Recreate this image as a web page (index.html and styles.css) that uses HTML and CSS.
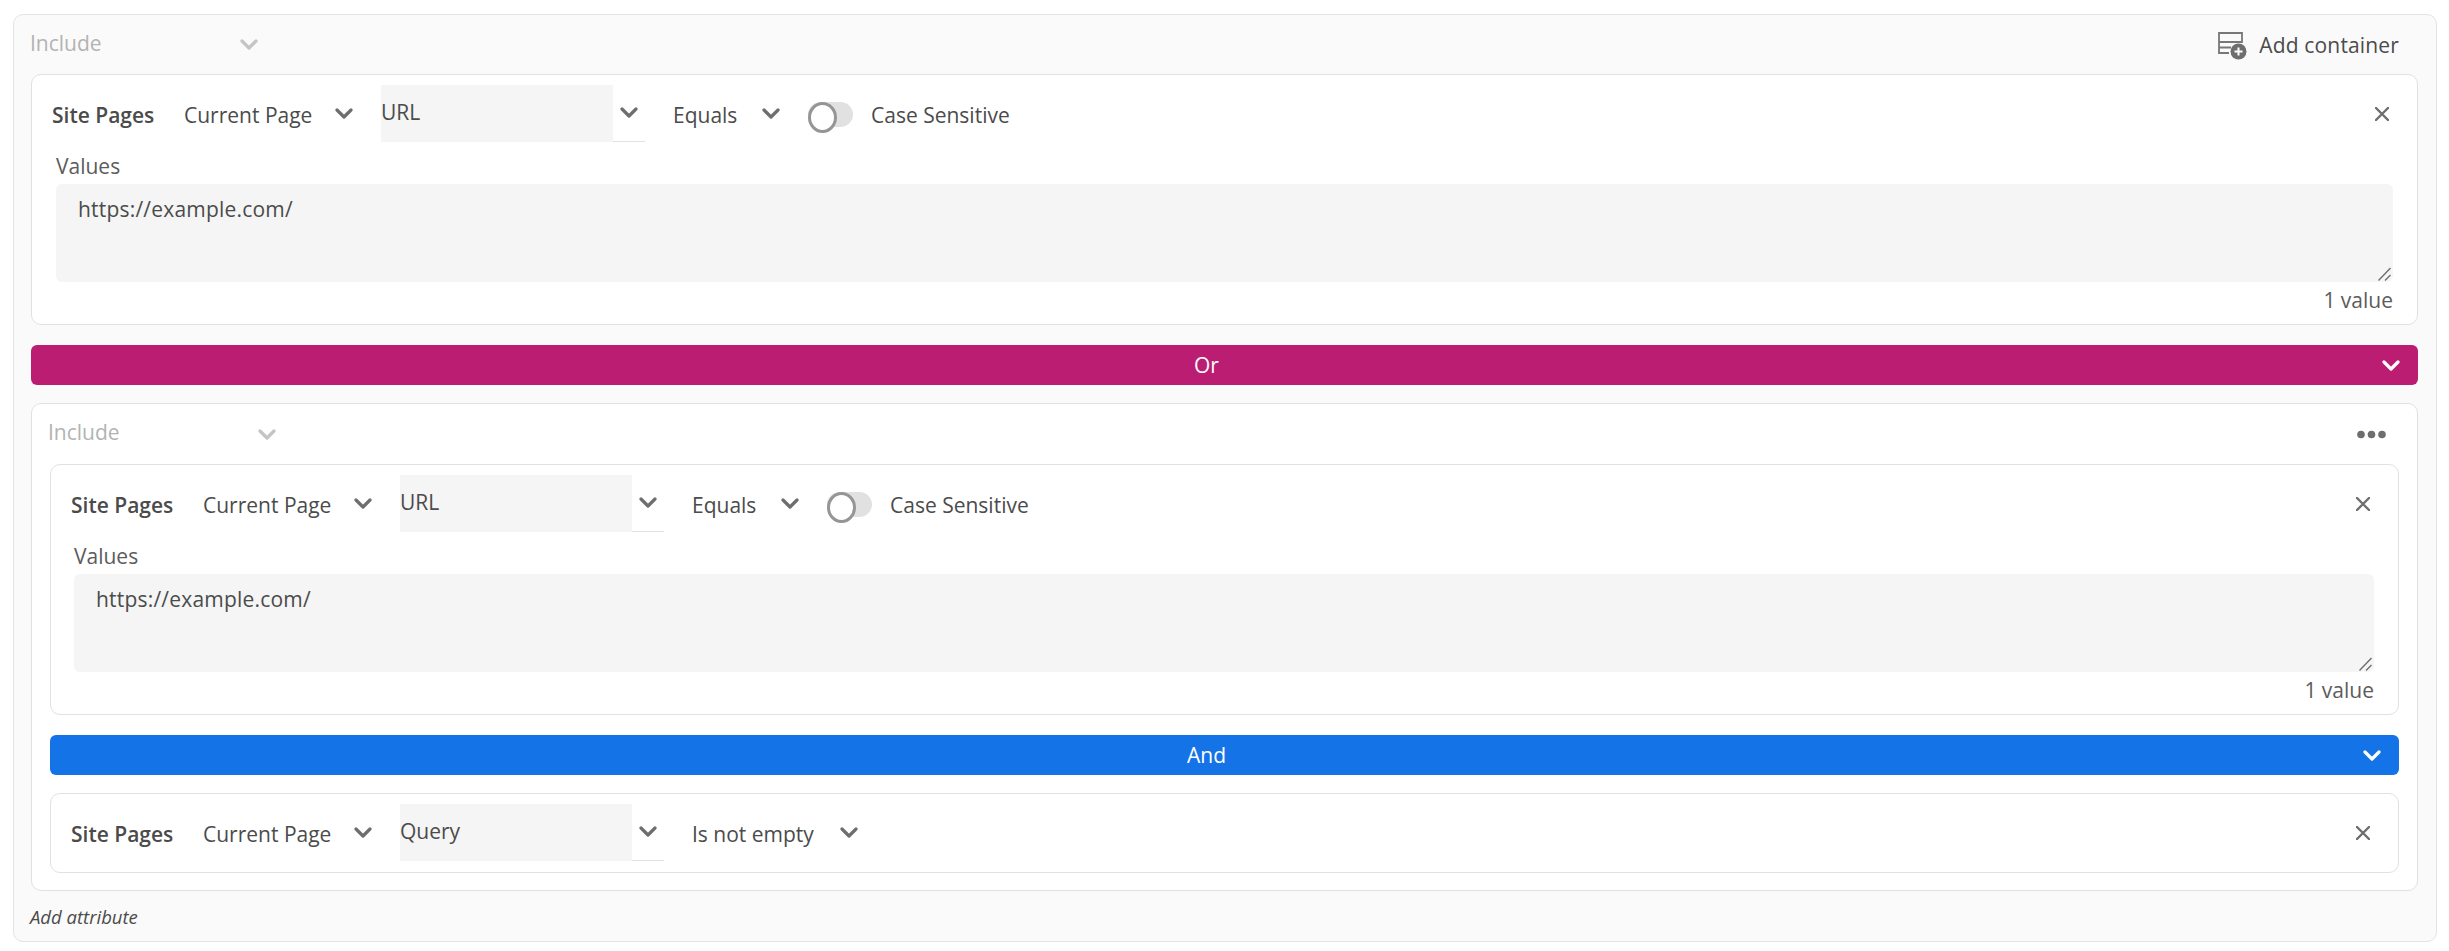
FILE: index.html
```html
<html>
    <head>
        <link rel="stylesheet" href="styles.css">
    </head>
    <body>
        <svg class="defs">
            <symbol id="chevron" viewBox="0 0 18 11">
                <path d="M2 2 L9 9 L16 2" fill="none" stroke="currentColor" stroke-width="3.2" stroke-linecap="round" stroke-linejoin="round"/>
            </symbol>
            <symbol id="close" viewBox="0 0 14 14">
                <path d="M1 1 L13 13 M13 1 L1 13" fill="none" stroke="currentColor" stroke-width="2.4" stroke-linecap="round"/>
            </symbol>
        </svg>

        <div class="builder">
            <div class="head">
                <div class="scope"><span>Include</span><svg class="chev"><use href="#chevron"/></svg></div>
                <div class="add">
                    <svg class="add-icon" viewBox="0 0 29 28">
                        <path d="M1 1 H24 V10 H1 Z M1 10 V21 H11 M1 15.5 H13" fill="none" stroke="#777" stroke-width="1.8"/>
                        <circle cx="20.5" cy="19.5" r="8" fill="#6e6e6e"/>
                        <path d="M20.5 15.5 V23.5 M16.5 19.5 H24.5" stroke="#fff" stroke-width="2"/>
                    </svg>
                    <span>Add container</span>
                </div>
            </div>

            <div class="card">
                <div class="row">
                    <span class="name">Site Pages</span>
                    <div class="pick page"><span>Current Page</span><svg class="chev"><use href="#chevron"/></svg></div>
                    <div class="combo"><div class="combo-text">URL</div><div class="combo-btn"><svg class="chev"><use href="#chevron"/></svg></div></div>
                    <div class="pick equals"><span>Equals</span><svg class="chev"><use href="#chevron"/></svg></div>
                    <div class="switch"></div>
                    <span class="switch-label">Case Sensitive</span>
                    <svg class="close"><use href="#close"/></svg>
                </div>
                <div class="values">
                    <label>Values</label>
                    <textarea readonly>https://example.com/</textarea>
                    <div class="count">1 value</div>
                </div>
            </div>

            <div class="bar or"><span>Or</span><svg class="chev"><use href="#chevron"/></svg></div>

            <div class="group">
                <div class="head">
                    <div class="scope"><span>Include</span><svg class="chev"><use href="#chevron"/></svg></div>
                    <svg class="dots" viewBox="0 0 29 9">
                        <circle cx="4" cy="4.5" r="3.8"/>
                        <circle cx="14.5" cy="4.5" r="3.8"/>
                        <circle cx="25" cy="4.5" r="3.8"/>
                    </svg>
                </div>

                <div class="card">
                    <div class="row">
                        <span class="name">Site Pages</span>
                        <div class="pick page"><span>Current Page</span><svg class="chev"><use href="#chevron"/></svg></div>
                        <div class="combo"><div class="combo-text">URL</div><div class="combo-btn"><svg class="chev"><use href="#chevron"/></svg></div></div>
                        <div class="pick equals"><span>Equals</span><svg class="chev"><use href="#chevron"/></svg></div>
                        <div class="switch"></div>
                        <span class="switch-label">Case Sensitive</span>
                        <svg class="close"><use href="#close"/></svg>
                    </div>
                    <div class="values">
                        <label>Values</label>
                        <textarea readonly>https://example.com/</textarea>
                        <div class="count">1 value</div>
                    </div>
                </div>

                <div class="bar and"><span>And</span><svg class="chev"><use href="#chevron"/></svg></div>

                <div class="card short">
                    <div class="row">
                        <span class="name">Site Pages</span>
                        <div class="pick page"><span>Current Page</span><svg class="chev"><use href="#chevron"/></svg></div>
                        <div class="combo"><div class="combo-text">Query</div><div class="combo-btn"><svg class="chev"><use href="#chevron"/></svg></div></div>
                        <div class="pick empty"><span>Is not empty</span><svg class="chev"><use href="#chevron"/></svg></div>
                        <svg class="close"><use href="#close"/></svg>
                    </div>
                </div>
            </div>

            <div class="foot">Add attribute</div>
        </div>
    </body>
</html>
```

FILE: styles.css
```css
* {
    box-sizing: border-box;
}

body {
    margin: 0;
    padding: 14px 12px 0 13px;
    background: white;
    font-family: "Open Sans", sans-serif;
    font-size: 21px;
    color: #4b4b4b;
}

.defs {
    display: none;
}

.builder {
    background: #fafafa;
    border: 1px solid #e3e3e3;
    border-radius: 10px;
    padding: 0 18px 0 17px;
    height: 928px;
}

.head {
    display: flex;
    align-items: center;
    justify-content: space-between;
    height: 59px;
}

.group > .head {
    height: 60px;
}

.scope {
    display: flex;
    align-items: center;
    justify-content: space-between;
    width: 228px;
    margin-left: -1px;
    color: #b3b3b3;
}

.group .scope {
    margin-left: -2px;
}

.scope span {
    margin-bottom: 4px;
}

.chev {
    width: 18px;
    height: 11px;
    color: #6e6e6e;
    flex: none;
}

.scope .chev {
    color: #c4c4c4;
}

.add {
    display: flex;
    align-items: center;
    gap: 12px;
    padding-right: 19px;
}

.add span {
    letter-spacing: 0.15px;
}

.add-icon {
    width: 29px;
    height: 28px;
    margin-top: 2px;
}

.dots {
    width: 29px;
    height: 9px;
    fill: #6e6e6e;
    margin-right: 13px;
}

.card {
    background: white;
    border: 1px solid #e1e1e1;
    border-radius: 10px;
    padding: 10px 0 8px 0;
    height: 251px;
}

.card.short {
    height: 80px;
}

.row {
    display: flex;
    align-items: center;
    height: 57px;
    padding: 0 28px 0 20px;
}

.name {
    width: 132px;
    font-weight: 600;
    padding-top: 3px;
}

.pick {
    display: flex;
    align-items: center;
    justify-content: space-between;
    margin-right: 28px;
}

.pick span,
.switch-label {
    padding-top: 3px;
}

.pick.page {
    width: 169px;
}

.pick.equals {
    width: 107px;
}

.pick.empty {
    width: 166px;
}

.combo {
    display: flex;
    height: 57px;
    margin-right: 28px;
}

.combo-text {
    width: 232px;
    background: #f5f5f5;
    padding-top: 13px;
    line-height: 28px;
}

.combo-btn {
    width: 32px;
    padding-bottom: 2px;
    border-bottom: 1px solid #e1e1e1;
    display: flex;
    align-items: center;
    justify-content: center;
}

.switch {
    width: 45px;
    height: 25px;
    margin-top: 2px;
    background: #e1e1e1;
    border-radius: 13px;
    margin-right: 18px;
}

.switch::before {
    content: "";
    display: block;
    width: 23px;
    height: 25px;
    background: white;
    border: 3px solid #959595;
    border-radius: 50%;
}

.close {
    width: 14px;
    height: 14px;
    color: #6e6e6e;
    margin-left: auto;
}

.values {
    padding: 0 24px;
}

.group .values {
    padding-left: 23px;
}

.values label {
    display: block;
    height: 42px;
    padding-top: 10px;
    line-height: 28px;
    color: #5c5c5c;
}

textarea {
    display: block;
    width: 100%;
    height: 98px;
    border: 0;
    border-radius: 6px;
    background: #f5f5f5;
    padding: 11px 22px;
    font-family: "Open Sans", sans-serif;
    font-size: 21px;
    letter-spacing: 0.2px;
    line-height: 28px;
    color: #4b4b4b;
    outline: 0;
    resize: vertical;
}

textarea::-webkit-resizer {
    background: url("data:image/svg+xml,%3Csvg xmlns='http://www.w3.org/2000/svg' width='15' height='15'%3E%3Cpath d='M0.5 13.5 L12.5 1 M7 13.5 L12.5 8' stroke='%236e6e6e' stroke-width='1.4' fill='none'/%3E%3C/svg%3E") no-repeat;
}

.count {
    margin-top: 4px;
    line-height: 28px;
    text-align: right;
    color: #5c5c5c;
}

.bar {
    display: flex;
    align-items: center;
    height: 40px;
    margin: 20px 0 18px 0;
    padding-right: 18px;
    border-radius: 6px;
    color: white;
}

.bar span {
    flex: 1;
    text-align: center;
}

.bar .chev {
    color: white;
}

.bar.or {
    background: #bb1d72;
}

.bar.and {
    background: #1473e6;
}

.group {
    background: white;
    border: 1px solid #e1e1e1;
    border-radius: 10px;
    padding: 0 18px 17px 18px;
    height: 488px;
}

.foot {
    height: 50px;
    margin-left: -1px;
    line-height: 52px;
    font-size: 18.5px;
    font-style: italic;
}
```
